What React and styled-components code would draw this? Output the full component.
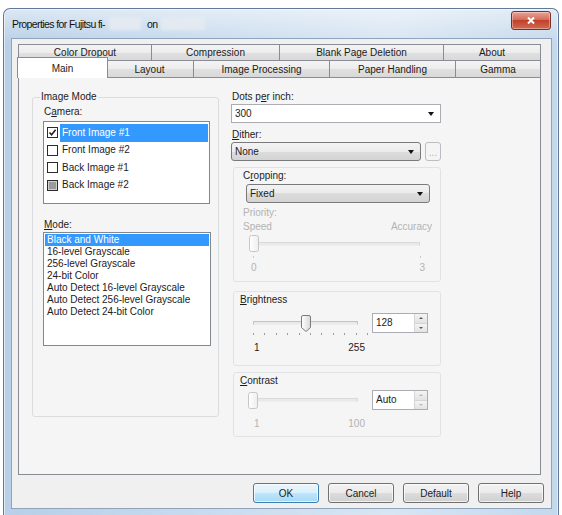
import React from "react";
import styled, { createGlobalStyle, css } from "styled-components";

const GlobalStyle = createGlobalStyle`
  html, body {
    margin: 0;
    padding: 0;
    background: #fff;
    overflow: hidden;
  }
  body {
    font-family: "Liberation Sans", Arial, sans-serif;
    font-size: 10px;
    color: #1c1c1c;
  }
`;

const Window = styled.div`
  box-sizing: border-box;
  margin: 8px 0 0 3px;
  width: 556px;
  height: 509px;
  border: 1px solid #62799a;
  border-bottom: none;
  border-radius: 7px 7px 0 0;
  background: linear-gradient(180deg, rgba(255, 255, 255, 0.5), rgba(255, 255, 255, 0) 34px),
    linear-gradient(90deg, #b8cfe7 0%, #cadcef 40%, #d8e5f2 70%, #c4d8ec 100%);
  box-shadow: inset 0 0 0 1px rgba(255, 255, 255, 0.55);
  display: flex;
  flex-direction: column;
`;

const TitleBar = styled.div`
  height: 29px;
  flex: none;
  display: flex;
  align-items: center;
  padding-left: 8px;
`;

const Title = styled.div`
  flex: 1;
  display: flex;
  align-items: center;
  font-size: 10.5px;
  letter-spacing: -0.6px;
  color: #111;
`;

const Smudge = styled.span`
  display: inline-block;
  width: ${(p) => p.$w}px;
  height: 13px;
  margin: 0 ${(p) => p.$gap}px 0 4px;
  background: #e4eaf1;
  filter: blur(1.5px);
`;

const CloseButton = styled.div`
  align-self: flex-start;
  margin: 2px 7px 0 0;
  width: 40px;
  height: 19px;
  box-sizing: border-box;
  border: 1px solid #7a3029;
  border-radius: 3px;
  background: linear-gradient(#e9a496 0%, #d66c59 45%, #c2412d 50%, #d06b50 100%);
  box-shadow: inset 0 0 0 1px rgba(255, 255, 255, 0.35);
  display: flex;
  align-items: center;
  justify-content: center;
`;

const Client = styled.div`
  flex: 1;
  margin: 0 6px 8px 7px;
  border: 1px solid #8ea3bc;
  background: #f0f0f0;
  padding: 5px 10px 0 6px;
  display: flex;
  flex-direction: column;
`;

const TabRow = styled.div`
  display: flex;
  height: ${(p) => p.$h}px;
  flex: none;
`;

const Tab = styled.div`
  box-sizing: border-box;
  flex: ${(p) => (p.$w ? "none" : "1")};
  width: ${(p) => (p.$w ? `${p.$w}px` : "auto")};
  margin-left: ${(p) => (p.$first ? 0 : -1)}px;
  border: 1px solid #898c95;
  border-bottom: none;
  background: linear-gradient(#f4f4f4, #ececec 50%, #e0e0e0 50%, #d9d9d9);
  display: flex;
  align-items: center;
  justify-content: center;
  padding-top: ${(p) => p.$pt || 0}px;
  color: #1a1a1a;
  ${(p) =>
    p.$active &&
    css`
      position: relative;
      z-index: 2;
      background: #fff;
      width: ${p.$w + 3}px;
      margin: -3px -2px -1px -1px;
      height: calc(100% + 4px);
    `}
`;

const Panel = styled.div`
  box-sizing: border-box;
  height: 398px;
  flex: none;
  border: 1px solid #898c95;
  background: #f5f5f5;
  display: flex;
  align-items: flex-start;
  gap: 12px;
  padding: 13px 0 0 13px;
`;

const GroupBox = styled.fieldset`
  box-sizing: border-box;
  width: 187px;
  height: 326px;
  margin: 0;
  padding: 0 0 0 10px;
  border: 1px solid #d9dde0;
  border-radius: 3px;
  min-width: 0;
`;

const GroupTitle = styled.legend`
  padding: 0 1px;
  margin-left: -3px;
  line-height: 12px;
`;

const Label = styled.div`
  line-height: 12px;
  margin: ${(p) => p.$m || "0"};
  color: ${(p) => (p.$off ? "#b3b3b3" : "#1c1c1c")};
`;

const ListBox = styled.div`
  box-sizing: border-box;
  width: ${(p) => p.$w}px;
  height: ${(p) => p.$h}px;
  background: #fff;
  border: 1px solid #828790;
  padding: ${(p) => p.$pad}px 1px 0;
`;

const CameraRow = styled.div`
  height: 17.5px;
  display: flex;
  align-items: center;
  padding-left: 2px;
`;

const Check = styled.span`
  box-sizing: border-box;
  width: 11px;
  height: 11px;
  flex: none;
  border: 1px solid #2b2b2b;
  background: ${(p) => (p.$mixed ? "#9a9a9a" : "#fff")};
  box-shadow: ${(p) => (p.$mixed ? "inset 0 0 0 1px #d0d0d0" : "none")};
  display: flex;
  align-items: center;
  justify-content: center;
`;

const CameraText = styled.span`
  flex: 1;
  margin-left: 2px;
  height: 18px;
  line-height: 18px;
  padding-left: 2px;
  background: ${(p) => (p.$sel ? "#3399ff" : "transparent")};
  color: ${(p) => (p.$sel ? "#fff" : "#1c1c1c")};
`;

const ModeItem = styled.div`
  height: 12px;
  line-height: 12px;
  padding-left: 2px;
  white-space: nowrap;
  background: ${(p) => (p.$sel ? "#3399ff" : "transparent")};
  color: ${(p) => (p.$sel ? "#fff" : "#1c1c1c")};
`;

const RightColumn = styled.div`
  width: 210px;
  display: flex;
  flex-direction: column;
`;

const Combo = styled.div`
  box-sizing: border-box;
  width: ${(p) => p.$w}px;
  height: 19px;
  flex: none;
  margin: ${(p) => p.$m || "0"};
  border: 1px solid ${(p) => (p.$plain ? "#abadb3" : "#7a7a7a")};
  border-radius: ${(p) => (p.$plain ? 0 : 3)}px;
  background: ${(p) =>
    p.$plain ? "#fff" : "linear-gradient(#f3f3f3, #ebebeb 50%, #dddddd 50%, #d3d3d3)"};
  display: flex;
  align-items: center;
  justify-content: space-between;
  padding: 0 6px 0 3px;
`;

const Arrow = styled.span`
  width: 0;
  height: 0;
  border-left: 3.5px solid transparent;
  border-right: 3.5px solid transparent;
  border-top: 4px solid #111;
`;

const DitherRow = styled.div`
  display: flex;
  gap: 4px;
  margin-top: 1px;
`;

const DotsButton = styled.div`
  box-sizing: border-box;
  width: 16px;
  height: 19px;
  border: 1px solid #b9bec2;
  border-radius: 3px;
  background: #f4f4f4;
  color: #b0b0b0;
  display: flex;
  align-items: flex-end;
  justify-content: center;
  padding-bottom: 3px;
  line-height: 8px;
`;

const Frame = styled.div`
  box-sizing: border-box;
  width: 208px;
  height: ${(p) => p.$h}px;
  margin: ${(p) => p.$m} 0 0 2px;
  border: 1px solid #e0e3e6;
  border-radius: 3px;
  padding: 1px ${(p) => p.$px}px 0;
  display: flex;
  flex-direction: column;
`;

const SpreadRow = styled.div`
  display: flex;
  justify-content: space-between;
  line-height: 12px;
  width: ${(p) => p.$w}px;
  margin: ${(p) => p.$m || "0"};
  color: ${(p) => (p.$off ? "#b3b3b3" : "#1c1c1c")};
`;

const SliderBox = styled.div`
  position: relative;
  width: ${(p) => p.$w}px;
  height: 19px;
  flex: none;
  margin: ${(p) => p.$m || "0"};
  display: flex;
  flex-direction: column;
  justify-content: center;
`;

const Track = styled.div`
  height: 2px;
  margin: 0 5px;
  border: 1px solid ${(p) => (p.$off ? "#dadada" : "#c4c4c4")};
  border-bottom-color: #eeeeee;
  background: #e9e9e9;
`;

const Thumb = styled.svg`
  position: absolute;
  top: 1px;
`;

const Ticks = styled.div`
  display: flex;
  justify-content: space-between;
  padding: 0 ${(p) => p.$inset}px;
  height: 3px;
  margin-top: ${(p) => p.$mt || 0}px;
`;

const Tick = styled.span`
  width: 1px;
  height: 2px;
  background: ${(p) => (p.$off ? "#c9c9c9" : "#9a9a9a")};
`;

const ControlRow = styled.div`
  display: flex;
  align-items: center;
  gap: 9px;
  margin-top: ${(p) => p.$mt}px;
`;

const SpinField = styled.div`
  display: flex;
  width: 56px;
  height: 20px;
  box-sizing: border-box;
  border: 1px solid #abadb3;
  background: #fff;
`;

const SpinText = styled.div`
  flex: 1;
  padding-left: 3px;
  line-height: 18px;
`;

const SpinButtons = styled.div`
  width: 12px;
  display: flex;
  flex-direction: column;
  border-left: 1px solid #d5d5d5;
`;

const SpinHalf = styled.div`
  flex: 1;
  background: linear-gradient(#f4f4f4, #e3e3e3);
  border-bottom: ${(p) => (p.$top ? "1px solid #d5d5d5" : "none")};
  display: flex;
  align-items: center;
  justify-content: center;
`;

const SmallArrow = styled.span`
  width: 0;
  height: 0;
  border-left: 2px solid transparent;
  border-right: 2px solid transparent;
  ${(p) => (p.$up ? "border-bottom" : "border-top")}: 2px solid ${(p) => (p.$off ? "#b9b9b9" : "#5a5a5a")};
`;

const ButtonRow = styled.div`
  display: flex;
  justify-content: flex-end;
  gap: 9px;
  margin: 8px -3px 0 0;
`;

const PushButton = styled.div`
  box-sizing: border-box;
  width: 66px;
  height: 20px;
  border: 1px solid ${(p) => (p.$default ? "#3c7fb1" : "#707070")};
  border-radius: 3px;
  background: ${(p) =>
    p.$default
      ? "linear-gradient(#eaf6fd, #d9f0fc 50%, #bee6fd 50%, #a7d9f5)"
      : "linear-gradient(#f2f2f2, #ebebeb 50%, #dddddd 50%, #cfcfcf)"};
  box-shadow: inset 0 0 0 1px rgba(255, 255, 255, 0.7);
  display: flex;
  align-items: center;
  justify-content: center;
  color: #1c1c1c;
`;

const rowOneTabs = [
  { name: "Color Dropout", w: 134 },
  { name: "Compression", w: 129 },
  { name: "Blank Page Deletion", w: 165 },
  { name: "About" },
];

const rowTwoTabs = [
  { name: "Main", w: 88, active: true },
  { name: "Layout", w: 89 },
  { name: "Image Processing", w: 137 },
  { name: "Paper Handling", w: 127 },
  { name: "Gamma" },
];

const cameras = [
  { name: "Front Image #1", checked: true, selected: true },
  { name: "Front Image #2" },
  { name: "Back Image #1" },
  { name: "Back Image #2", mixed: true },
];

const modes = [
  "Black and White",
  "16-level Grayscale",
  "256-level Grayscale",
  "24-bit Color",
  "Auto Detect 16-level Grayscale",
  "Auto Detect 256-level Grayscale",
  "Auto Detect 24-bit Color",
];

const SliderThumb = ({ left, pointed, off }) => (
  <Thumb width="10" height="18" viewBox="0 0 10 18" style={{ left }}>
    <defs>
      <linearGradient id={off ? "thumbOff" : "thumbOn"} x1="0" y1="0" x2="1" y2="0">
        <stop offset="0" stopColor="#ffffff" />
        <stop offset="1" stopColor={off ? "#eeeeee" : "#d8d8d8"} />
      </linearGradient>
    </defs>
    <path
      d={
        pointed
          ? "M2 0.5 H8 Q9.5 0.5 9.5 2 V12.5 L5 16.5 L0.5 12.5 V2 Q0.5 0.5 2 0.5 Z"
          : "M2.5 0.5 H7.5 Q9.5 0.5 9.5 2.5 V14.5 Q9.5 16.5 7.5 16.5 H2.5 Q0.5 16.5 0.5 14.5 V2.5 Q0.5 0.5 2.5 0.5 Z"
      }
      fill={`url(#${off ? "thumbOff" : "thumbOn"})`}
      stroke={off ? "#c6c6c6" : "#7b7b7b"}
    />
  </Thumb>
);

const Slider = ({ width, value, pointed, off, m }) => {
  const left = Math.round(value * (width - 10));
  return (
    <SliderBox $w={width} $m={m}>
      <Track $off={off} />
      <SliderThumb left={left} pointed={pointed} off={off} />
    </SliderBox>
  );
};

const SpinBox = ({ value, off }) => (
  <SpinField>
    <SpinText>{value}</SpinText>
    <SpinButtons>
      <SpinHalf $top>
        <SmallArrow $up $off={off} />
      </SpinHalf>
      <SpinHalf>
        <SmallArrow $off={off} />
      </SpinHalf>
    </SpinButtons>
  </SpinField>
);

const CheckMark = () => (
  <svg width="9" height="9" viewBox="0 0 9 9">
    <path d="M1.5 4.5 L3.6 6.8 L7.6 1.8" fill="none" stroke="#222" strokeWidth="1.6" />
  </svg>
);

export default function App() {
  return (
    <>
      <GlobalStyle />
      <Window>
        <TitleBar>
          <Title>
            Properties for Fujitsu fi-
            <Smudge $w={32} $gap={6} />
            on
            <Smudge $w={44} $gap={0} />
          </Title>
          <CloseButton>
            <svg width="10" height="9" viewBox="0 0 10 9">
              <path d="M2 1.5 L8 7.5 M8 1.5 L2 7.5" stroke="#fff" strokeWidth="2" />
            </svg>
          </CloseButton>
        </TitleBar>

        <Client>
          <TabRow $h={16}>
            {rowOneTabs.map((t, i) => (
              <Tab key={t.name} $w={t.w} $first={i === 0}>
                {t.name}
              </Tab>
            ))}
          </TabRow>
          <TabRow $h={17}>
            {rowTwoTabs.map((t, i) => (
              <Tab key={t.name} $w={t.w} $first={i === 0} $active={t.active} $pt={1}>
                {t.name}
              </Tab>
            ))}
          </TabRow>

          <Panel>
            <GroupBox>
              <GroupTitle>Image Mode</GroupTitle>
              <Label $m="3px 0 0 1px">
                C<u>a</u>mera:
              </Label>
              <ListBox $w={167} $h={83} $pad={2} style={{ marginTop: 3 }}>
                {cameras.map((c) => (
                  <CameraRow key={c.name}>
                    <Check $mixed={c.mixed}>{c.checked && <CheckMark />}</Check>
                    <CameraText $sel={c.selected}>{c.name}</CameraText>
                  </CameraRow>
                ))}
              </ListBox>
              <Label $m="15px 0 0 1px">
                <u>M</u>ode:
              </Label>
              <ListBox $w={168} $h={114} $pad={1} style={{ marginTop: 1 }}>
                {modes.map((m, i) => (
                  <ModeItem key={m} $sel={i === 0}>
                    {m}
                  </ModeItem>
                ))}
              </ListBox>
            </GroupBox>

            <RightColumn>
              <Label $m="0 0 0 1px">
                Dots p<u>e</u>r inch:
              </Label>
              <Combo $w={210} $plain $m="1px 0 0">
                300
                <Arrow />
              </Combo>
              <Label $m="6px 0 0 1px">
                <u>D</u>ither:
              </Label>
              <DitherRow>
                <Combo $w={190}>
                  None
                  <Arrow />
                </Combo>
                <DotsButton>...</DotsButton>
              </DitherRow>

              <Frame $h={115} $m="6px" $px={9}>
                <Label $m="1px 0 0">
                  C<u>r</u>opping:
                </Label>
                <Combo $w={184} $m="2px 0 0 3px">
                  Fixed
                  <Arrow />
                </Combo>
                <Label $off $m="4px 0 0">
                  Priority:
                </Label>
                <SpreadRow $off $w={189} $m="2px 0 0">
                  <span>Speed</span>
                  <span>Accuracy</span>
                </SpreadRow>
                <Slider width={176} value={0} off m="1px 0 0 6px" />
                <Ticks $inset={10} $mt={3}>
                  <Tick $off />
                  <Tick $off />
                </Ticks>
                <SpreadRow $off $w={174} $m="3px 0 0 8px">
                  <span>0</span>
                  <span>3</span>
                </SpreadRow>
              </Frame>

              <Frame $h={75} $m="9px" $px={6}>
                <Label $m="1px 0 0">
                  <u>B</u>rightness
                </Label>
                <ControlRow $mt={7}>
                  <Slider width={115} value={0.5} pointed m="0 0 0 8px" />
                  <SpinBox value="128" />
                </ControlRow>
                <Ticks $inset={13} $mt={0} style={{ width: 115 }}>
                  {Array.from({ length: 11 }, (_, i) => (
                    <Tick key={i} />
                  ))}
                </Ticks>
                <SpreadRow $w={111} $m="6px 0 0 14px">
                  <span>1</span>
                  <span>255</span>
                </SpreadRow>
              </Frame>

              <Frame $h={65} $m="6px" $px={6}>
                <Label $m="1px 0 0">
                  <u>C</u>ontrast
                </Label>
                <ControlRow $mt={3}>
                  <Slider width={115} value={0} off m="0 0 0 8px" />
                  <SpinBox value="Auto" off />
                </ControlRow>
                <SpreadRow $off $w={111} $m="8px 0 0 14px">
                  <span>1</span>
                  <span>100</span>
                </SpreadRow>
              </Frame>
            </RightColumn>
          </Panel>

          <ButtonRow>
            <PushButton $default>OK</PushButton>
            <PushButton>Cancel</PushButton>
            <PushButton>Default</PushButton>
            <PushButton>Help</PushButton>
          </ButtonRow>
        </Client>
      </Window>
    </>
  );
}
